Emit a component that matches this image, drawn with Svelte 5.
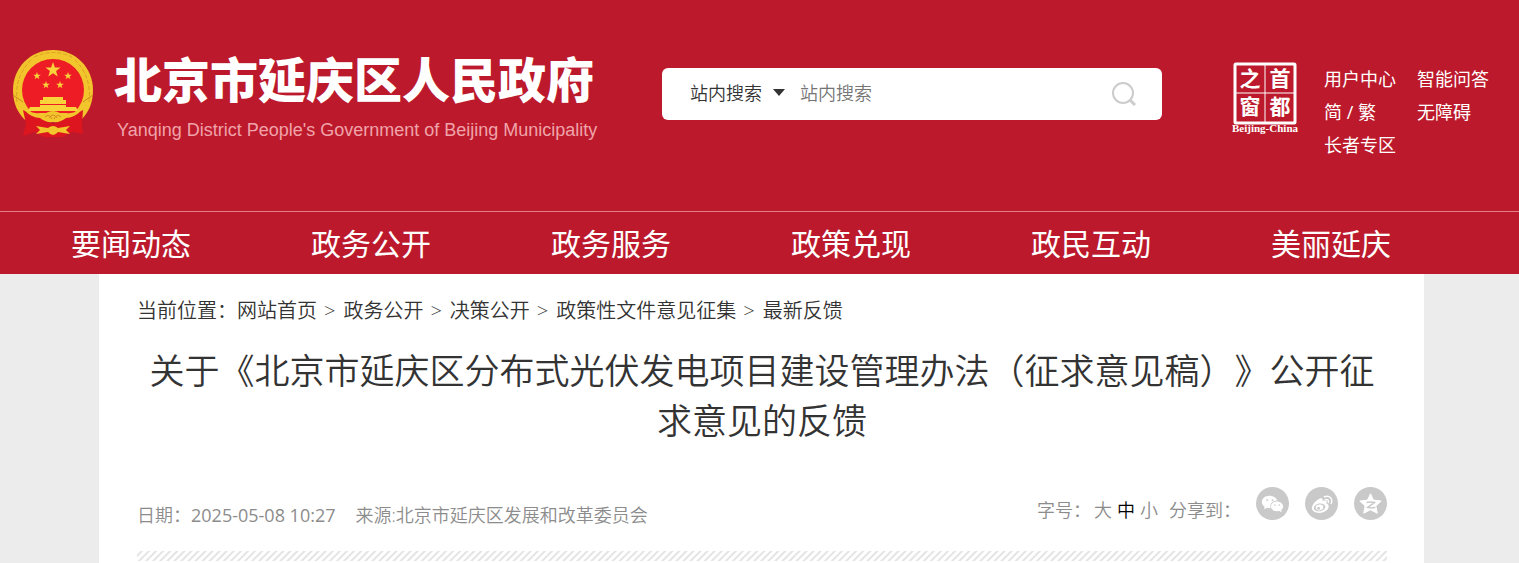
<script>
  let scope = $state('site');
  let keyword = $state('');
  let size = $state('中');

  const quickLinks = ['用户中心', '智能问答', '简 / 繁', '无障碍', '长者专区'];
  const nav = ['要闻动态', '政务公开', '政务服务', '政策兑现', '政民互动', '美丽延庆'];
  const crumbs = ['网站首页', '政务公开', '决策公开', '政策性文件意见征集', '最新反馈'];
  const sizes = ['大', '中', '小'];
</script>

{#snippet star(x, y, r)}
  <polygon
    transform="translate({x} {y}) scale({r})"
    points="0,-1 .24,-.32 .95,-.31 .38,.12 .59,.81 0,.4 -.59,.81 -.38,.12 -.95,-.31 -.24,-.32" />
{/snippet}

<header>
  <div class="top">
    <a class="brand" href="#home">
      <svg class="emblem" viewBox="0 0 82 88" aria-hidden="true">
        <path d="M41 0 C64 0 81 18 81 40 C81 54 76 63 69 70 H13 C6 63 1 54 1 40 C1 18 18 0 41 0 Z" fill="#f2c52c" />
        <path d="M5 52 Q2 26 20 9 M77 52 Q80 26 62 9 M22 7 Q41 -2 60 7" fill="none" stroke="#dca124" stroke-width="1" stroke-dasharray="4 2" />
        <path d="M1 45 L11 52 M81 45 L71 52" stroke="#c98a1e" />
        <circle cx="41" cy="40" r="31" fill="#ee1c25" />
        <g fill="#f8d33a">
          {@render star(41, 20, 8)}
          {@render star(25, 26, 4)}
          {@render star(56, 26, 4)}
          {@render star(34, 35, 4)}
          {@render star(48, 35, 4)}
        </g>
        <path d="M31 47 H51 V50 H54 V54 H28 V50 H31 Z M28 55 H54 V57 H64 L66 61 H16 L18 57 H28 Z" fill="#f8d33a" />
        <path d="M11 60 L24 66 L41 74 L58 66 L71 60 L70 74 L71 84 L60 82 L50 87 H32 L22 82 L11 86 L14 74 Z" fill="#dc151f" />
        <path d="M12 60 Q20 64 28 63 H34 Q41 59 48 63 H54 Q62 64 70 60 Q62 68 54 68 Q48 73 41 72 Q34 73 28 68 Q20 68 12 60 Z" fill="#f2c52c" />
        <path d="M37 68 Q41 62 45 68 M33 67 Q37 63 40 69 M49 67 Q45 63 42 69" fill="none" stroke="#d98a22" />
        <path d="M24 76 L36 78 Q41 74 46 78 L58 76 L54 80 L58 84 L46 82 Q41 88 36 82 L24 84 L28 80 Z" fill="#f2c52c" />
      </svg>
      <span class="names">
        <span class="name">北京市延庆区人民政府</span>
        <span class="name-en">Yanqing District People's Government of Beijing Municipality</span>
      </span>
    </a>

    <form class="search" onsubmit={(e) => e.preventDefault()}>
      <span class="scope">
        <select bind:value={scope} aria-label="搜索范围">
          <option value="site">站内搜索</option>
        </select>
        <svg class="caret" viewBox="0 0 14 8" aria-hidden="true"><path d="M1 0 H13 L7 7 Z" fill="#333" /></svg>
      </span>
      <input type="text" bind:value={keyword} placeholder="站内搜索" aria-label="站内搜索" />
      <button type="submit" aria-label="搜索">
        <svg viewBox="0 0 26 26" fill="none" stroke="#ccc" stroke-width="2">
          <circle cx="13" cy="13" r="10" />
          <path d="M20 20 L25 25" stroke-width="3" />
        </svg>
      </button>
    </form>

    <div class="tools">
      <a class="seal" href="#capital" aria-label="首都之窗">
        <svg viewBox="0 0 70 74">
          <rect x="5" y="2" width="60" height="59" rx="1" fill="none" stroke="#fff" stroke-width="3" />
          <path d="M35 3 V60 M6 31 H64" stroke="#fff" stroke-width="1" />
          <g class="seal-chars">
            <text x="20" y="24">之</text>
            <text x="50" y="24">首</text>
            <text x="20" y="52">窗</text>
            <text x="50" y="52">都</text>
          </g>
          <text class="seal-en" x="35" y="70">Beijing-China</text>
        </svg>
      </a>
      <div class="quick">
        {#each quickLinks as link}
          <a href="#{link}">{link}</a>
        {/each}
      </div>
    </div>
  </div>

  <nav>
    {#each nav as item}
      <a href="#{item}">{item}</a>
    {/each}
  </nav>
</header>

<main>
  <div class="crumbs">
    <span>当前位置：</span>
    {#each crumbs as crumb, i}
      {#if i > 0}<span class="sep">&gt;</span>{/if}
      <a href="#{crumb}">{crumb}</a>
    {/each}
  </div>

  <h1>关于《北京市延庆区分布式光伏发电项目建设管理办法（征求意见稿）》公开征求意见的反馈</h1>

  <div class="meta">
    <div class="source">
      <span>日期：<time>2025-05-08 10:27</time></span>
      <span>来源:北京市延庆区发展和改革委员会</span>
    </div>
    <div class="actions">
      <span>字号：</span>
      <div class="sizes">
        {#each sizes as s}
          <button class:active={size === s} onclick={() => (size = s)}>{s}</button>
        {/each}
      </div>
      <span>分享到：</span>
      <div class="share">
        <a href="#wechat" aria-label="微信">
          <svg viewBox="0 0 34 34">
            <circle cx="17" cy="17" r="17" fill="#c9c9c9" />
            <path d="M14 9 C9 9 6 12 6 15.500 C6 17.500 7 19 9 20.500 L8 23 L11.500 21.500 L15 22 C14 17 17 14 22 14 C21 11 18 9 14 9 Z" fill="#fff" />
            <path d="M21.500 15 C18 15 15.500 17.300 15.500 20 C15.500 23 18 25 21.500 25 L24 24.600 L26.500 26 L26 23.700 C27.300 22.700 28 21.500 28 20 C28 17.300 25 15 21.500 15 Z" fill="#fff" />
            <g fill="#c9c9c9">
              <circle cx="11.500" cy="13.500" r="1" /><circle cx="17" cy="13.500" r="1" />
              <circle cx="19.500" cy="18.500" r=".8" /><circle cx="24" cy="18.500" r=".8" />
            </g>
          </svg>
        </a>
        <a href="#weibo" aria-label="微博">
          <svg viewBox="0 0 34 34">
            <circle cx="17" cy="17" r="17" fill="#c9c9c9" />
            <path d="M15 12 C17 11 19 12 18 14.500 C21 13.500 23 14 22 17 C25 18 25 21 23 23.500 C19 28 8 28 7 22 C7 18 12 13 15 12 Z" fill="#fff" />
            <ellipse cx="15" cy="21" rx="6" ry="4" fill="#c9c9c9" transform="rotate(-10 15 21)" />
            <ellipse cx="15" cy="21" rx="4" ry="3" fill="#fff" transform="rotate(-10 15 21)" />
            <circle cx="14" cy="22" r="1.500" fill="#c9c9c9" />
            <path d="M20 10 C25 8 29 12 27 17 M21 13 C23 12.500 25 14 24 16" fill="none" stroke="#fff" stroke-width="1.500" stroke-linecap="round" />
          </svg>
        </a>
        <a href="#qzone" aria-label="QQ空间">
          <svg viewBox="0 0 34 34">
            <circle cx="17" cy="17" r="17" fill="#c9c9c9" />
            <path d="M17 7 L20 13.500 L28 14.500 L22.500 19.500 L24 27 L17 23.500 L10 27 L11.500 19.500 L6 14.500 L14 13.500 Z" fill="#fff" stroke="#fff" stroke-linejoin="round" />
            <path d="M13 16 Q17 15 21 16 L14 21 Q18 22 22 21" fill="none" stroke="#c9c9c9" stroke-width="1.500" />
          </svg>
        </a>
      </div>
    </div>
  </div>
  <div class="stripes"></div>
</main>

<style>
  :global(body) {
    background: #ececec;
    color: #333;
    font-family: 'Open Sans', 'Noto Sans CJK SC', sans-serif;
    font-size: 18px;
    font-weight: 350;
  }

  a {
    color: inherit;
    text-decoration: none;
  }

  button,
  input,
  select {
    padding: 0;
    border: 0;
    outline: 0;
    background: none;
    color: inherit;
    font: inherit;
  }

  button {
    cursor: pointer;
  }

  svg {
    display: block;
  }

  header {
    background: #bc1a2c;
    color: #fff;
    font-weight: 400;
  }

  .top {
    display: grid;
    grid-template-columns: 650px 500px 1fr;
    align-items: start;
    box-sizing: border-box;
    min-height: 211px;
    padding: 50px 24px 0 12px;
  }

  .brand {
    display: flex;
    gap: 20px;
  }

  .emblem {
    width: 82px;
    height: 88px;
  }

  .names {
    display: flex;
    flex-direction: column;
    white-space: nowrap;
  }

  .name {
    font-size: 48px;
    font-weight: 900;
    line-height: 60px;
  }

  .name-en {
    margin-top: 8px;
    padding-left: 3px;
    color: #f0a3aa;
    font-family: 'Liberation Sans', Arial, sans-serif;
    font-size: 18px;
    line-height: 24px;
  }

  .search {
    display: flex;
    align-items: center;
    height: 52px;
    margin-top: 18px;
    padding: 0 26px 2px 28px;
    box-sizing: border-box;
    border-radius: 6px;
    background: #fff;
    color: #333;
    font-weight: 350;
  }

  .scope {
    display: flex;
    align-items: center;
    gap: 10px;
    margin-right: 14px;
  }

  .scope select {
    appearance: none;
    width: 72px;
  }

  .caret {
    width: 14px;
    height: 8px;
    pointer-events: none;
  }

  .search input {
    flex: 1;
    min-width: 0;
  }

  .search input::placeholder {
    color: #757575;
  }

  .search button svg {
    width: 26px;
    height: 26px;
  }

  .tools {
    display: flex;
    justify-content: flex-end;
    gap: 24px;
    margin-top: 12px;
  }

  .seal svg {
    width: 70px;
    height: 74px;
  }

  .seal text {
    fill: #fff;
    text-anchor: middle;
  }

  .seal-chars {
    font-size: 21px;
    font-weight: 700;
  }

  .seal-en {
    font-family: 'Liberation Serif', serif;
    font-size: 11px;
    font-weight: 700;
  }

  .quick {
    display: grid;
    grid-template-columns: 72px 72px;
    gap: 0 21px;
    padding: 1px 6px 0 0;
    line-height: 33px;
    white-space: nowrap;
  }

  nav {
    display: grid;
    grid-template-columns: repeat(6, 1fr);
    padding: 2px 68px 0 11px;
    border-top: 1px solid #e57e88;
    font-size: 30px;
    line-height: 60px;
    text-align: center;
  }

  main {
    margin: 0 95px 0 99px;
    padding: 21px 37px 2px 38px;
    background: #fff;
  }

  .crumbs {
    display: flex;
    font-size: 20px;
    line-height: 32px;
  }

  .sep {
    margin: 0 8px 0 7px;
  }

  h1 {
    margin: 19px 0 0;
    font-size: 35px;
    font-weight: 350;
    line-height: 50px;
    text-align: center;
    text-spacing-trim: space-all;
  }

  .meta {
    display: flex;
    justify-content: space-between;
    align-items: flex-start;
    margin-top: 41px;
    color: #8c8c8c;
    line-height: 34px;
  }

  .source {
    display: flex;
    gap: 20px;
    padding-top: 11px;
  }

  .source time {
    font-weight: 400;
  }

  .actions {
    display: flex;
    align-items: flex-start;
    line-height: 46px;
  }

  .sizes {
    display: flex;
    gap: 5px;
    margin: 0 11px 0 3px;
  }

  .sizes .active {
    color: #000;
  }

  .share {
    display: flex;
    gap: 16px;
    margin-left: 15px;
  }

  .share svg {
    width: 33px;
    height: 33px;
  }

  .stripes {
    height: 10px;
    margin-top: 18px;
    background: repeating-linear-gradient(135deg, #fff 0 2px, #e4e4e4 3px 4px, #fff 5px);
  }
</style>
